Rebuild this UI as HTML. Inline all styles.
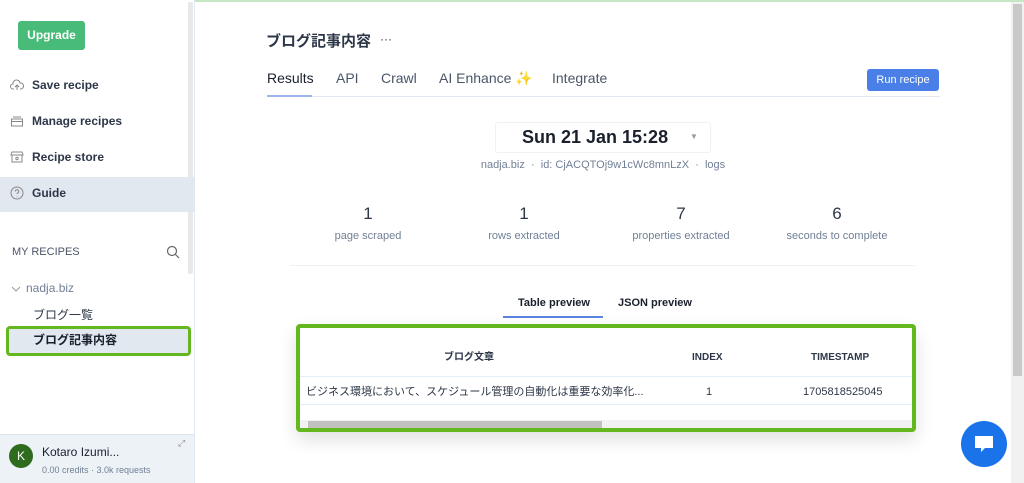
<!DOCTYPE html>
<html><head><meta charset="utf-8"><style>
*{box-sizing:border-box;margin:0;padding:0}
body{width:1024px;height:483px;overflow:hidden;background:#fff;font-family:"Liberation Sans","Noto Sans CJK JP",sans-serif;color:#2d3748;position:relative}
.abs{position:absolute}
.side{left:0;top:0;width:195px;height:483px;border-right:1px solid #e2e8f0;background:#fff}
.nav{position:absolute;left:10px;font-size:12px;font-weight:bold;color:#2d3748;display:flex;align-items:center}
.nav svg{margin-right:8px}
.tab{position:absolute;top:70px;font-size:14px;color:#4a5568}
.stat{position:absolute;width:160px;text-align:center}
.stat b{display:block;font-weight:normal;font-size:17px;color:#2d3748}
.stat span{display:block;font-size:11px;color:#718096;margin-top:6px}
.th{position:absolute;top:23px;height:14px;line-height:14px;font-size:10px;font-weight:bold;color:#2d3748}
.td{position:absolute;top:57px;height:14px;line-height:14px;font-size:11px;color:#2d3748;white-space:nowrap}
</style></head><body>
<div class="abs" style="left:0;top:0;width:1024px;height:2px;background:#c6e6c4"></div>
<div class="abs side">
  <div class="abs" style="left:18px;top:21px;width:67px;height:29px;background:#48bb78;border-radius:3px;color:#fff;font-size:12px;font-weight:bold;text-align:center;line-height:29px">Upgrade</div>
  <div class="abs" style="left:188px;top:2px;width:5px;height:272px;background:#e8e8e8;border-radius:2px"></div>
  <div class="nav" style="top:78px"><svg width="14" height="14" viewBox="0 0 14 14" fill="none" stroke="#888" stroke-width="1"><path d="M4 11H3a2.5 2.5 0 0 1 0-5 3.5 3.5 0 0 1 7-1 2.5 2.5 0 0 1 1 6h-1M7 12V7M5 9l2-2 2 2"/></svg>Save recipe</div>
  <div class="nav" style="top:114px"><svg width="14" height="14" viewBox="0 0 14 14" fill="none" stroke="#888" stroke-width="1"><rect x="1.5" y="5" width="11" height="7"/><path d="M3 3h8M1.5 7.5h11"/></svg>Manage recipes</div>
  <div class="nav" style="top:150px"><svg width="14" height="14" viewBox="0 0 14 14" fill="none" stroke="#888" stroke-width="1"><path d="M2 2h10l1 3H1zM2 5v7h10V5"/><circle cx="7" cy="8.5" r="1.2"/></svg>Recipe store</div>
  <div class="abs" style="left:0;top:177px;width:194px;height:35px;background:#e2e8f0"></div>
  <div class="nav" style="top:186px"><svg width="14" height="14" viewBox="0 0 14 14" fill="none" stroke="#888" stroke-width="1"><circle cx="7" cy="7" r="6"/><path d="M5.3 5.5a1.7 1.7 0 1 1 2.2 1.6c-.4.2-.5.5-.5.9M7 10v.5"/></svg>Guide</div>
  <div class="abs" style="left:12px;top:246px;font-size:11px;color:#4a5568">MY RECIPES</div>
  <svg class="abs" style="left:166px;top:245px" width="14" height="14" viewBox="0 0 14 14" fill="none" stroke="#666" stroke-width="1.2"><circle cx="6" cy="6" r="4.5"/><path d="M9.5 9.5L13 13"/></svg>
  <svg class="abs" style="left:11px;top:286px" width="10" height="6" viewBox="0 0 10 6" fill="none" stroke="#999" stroke-width="1"><path d="M1 1l4 4 4-4"/></svg>
  <div class="abs" style="left:26px;top:281px;font-size:12px;color:#718096">nadja.biz</div>
  <div class="abs" style="left:33px;top:306px;font-size:12px;color:#2d3748">ブログ一覧</div>
  <div class="abs" style="left:6px;top:326px;width:185px;height:30px;border:3px solid #62b81e;border-radius:4px;background:#e2e8f0"></div>
  <div class="abs" style="left:33px;top:331px;font-size:12px;font-weight:bold;color:#1a202c">ブログ記事内容</div>
  <div class="abs" style="left:0;top:434px;width:194px;height:49px;background:#edf2f7;border-top:1px solid #dbe2ea"></div>
  <div class="abs" style="left:9px;top:444px;width:24px;height:24px;border-radius:50%;background:#2f6b1f;color:#fff;font-size:12px;text-align:center;line-height:24px">K</div>
  <div class="abs" style="left:42px;top:445px;font-size:12px;color:#1a202c">Kotaro Izumi...</div>
  <div class="abs" style="left:42px;top:465px;font-size:9px;color:#718096">0.00 credits · 3.0k requests</div>
  <div class="abs" style="left:178px;top:438px;font-size:9px;color:#888">⤢</div>
</div>
<div class="abs" style="left:1011px;top:2px;width:13px;height:481px;background:#f1f1f1"></div>
<div class="abs" style="left:1013px;top:4px;width:9px;height:372px;background:#c9c9c9"></div>
<div class="abs" style="left:266px;top:30px;font-size:15px;font-weight:bold;color:#2d3748">ブログ記事内容</div>
<div class="abs" style="left:380px;top:32px;font-size:12px;color:#2d3748">···</div>
<div class="tab" style="left:267px;color:#1a202c">Results</div>
<div class="tab" style="left:336px">API</div>
<div class="tab" style="left:381px">Crawl</div>
<div class="tab" style="left:439px">AI Enhance <span style="color:#e0b800">✨</span></div>
<div class="tab" style="left:552px">Integrate</div>
<div class="abs" style="left:267px;top:96px;width:673px;height:1px;background:#e2e8f0"></div>
<div class="abs" style="left:267px;top:95px;width:45px;height:2px;background:#9db5ec"></div>
<div class="abs" style="left:867px;top:69px;width:72px;height:22px;background:#4a7fe8;border-radius:3px;color:#fff;font-size:11px;text-align:center;line-height:22px">Run recipe</div>
<div class="abs" style="left:495px;top:122px;width:216px;height:31px;border:1px solid #edf2f7;border-radius:3px"></div>
<div class="abs" style="left:522px;top:127px;font-size:18px;font-weight:bold;color:#1a202c">Sun 21 Jan 15:28</div>
<div class="abs" style="left:690px;top:132px;font-size:8px;color:#999">▼</div>
<div class="abs" style="left:0;top:159px;width:1206px;text-align:center;font-size:11px;color:#718096">nadja.biz &nbsp;·&nbsp; id: CjACQTOj9w1cWc8mnLzX &nbsp;·&nbsp; logs</div>
<div class="stat" style="left:288px;top:204px"><b>1</b><span>page scraped</span></div>
<div class="stat" style="left:444px;top:204px"><b>1</b><span>rows extracted</span></div>
<div class="stat" style="left:601px;top:204px"><b>7</b><span>properties extracted</span></div>
<div class="stat" style="left:757px;top:204px"><b>6</b><span>seconds to complete</span></div>
<div class="abs" style="left:290px;top:265px;width:625px;height:1px;background:#edf2f7"></div>
<div class="abs" style="left:518px;top:297px;font-size:11px;font-weight:bold;color:#1a202c">Table preview</div>
<div class="abs" style="left:618px;top:297px;font-size:11px;font-weight:bold;color:#1a202c">JSON preview</div>
<div class="abs" style="left:503px;top:316px;width:100px;height:2px;background:#5a86e0"></div>
<div class="abs" style="left:296px;top:324px;width:620px;height:108px;border:4px solid #62b81e;border-radius:4px;background:#fff;box-shadow:0 8px 18px rgba(0,0,0,.12);overflow:hidden">
  <div class="th" style="left:144px">ブログ文章</div>
  <div class="th" style="left:392px">INDEX</div>
  <div class="th" style="left:511px">TIMESTAMP</div>
  <div class="abs" style="left:0;top:48px;width:612px;height:1px;background:#e5edf5"></div>
  <div class="td" style="left:6px">ビジネス環境において、スケジュール管理の自動化は重要な効率化...</div>
  <div class="td" style="left:406px">1</div>
  <div class="td" style="left:503px">1705818525045</div>
  <div class="abs" style="left:0;top:76px;width:612px;height:1px;background:#e5edf5"></div>
  <div class="abs" style="left:0;top:92px;width:612px;height:10px;background:#f1f1f1"></div>
  <div class="abs" style="left:8px;top:93px;width:294px;height:8px;background:#c1c1c1"></div>
</div>
<div class="abs" style="left:961px;top:421px;width:46px;height:46px;border-radius:50%;background:#1a73e8"></div>
<svg class="abs" style="left:972px;top:432px" width="24" height="24" viewBox="0 0 24 24"><path d="M3 4h18v12h-8l-4 4v-4H3z" fill="#fff"/></svg>
</body></html>
